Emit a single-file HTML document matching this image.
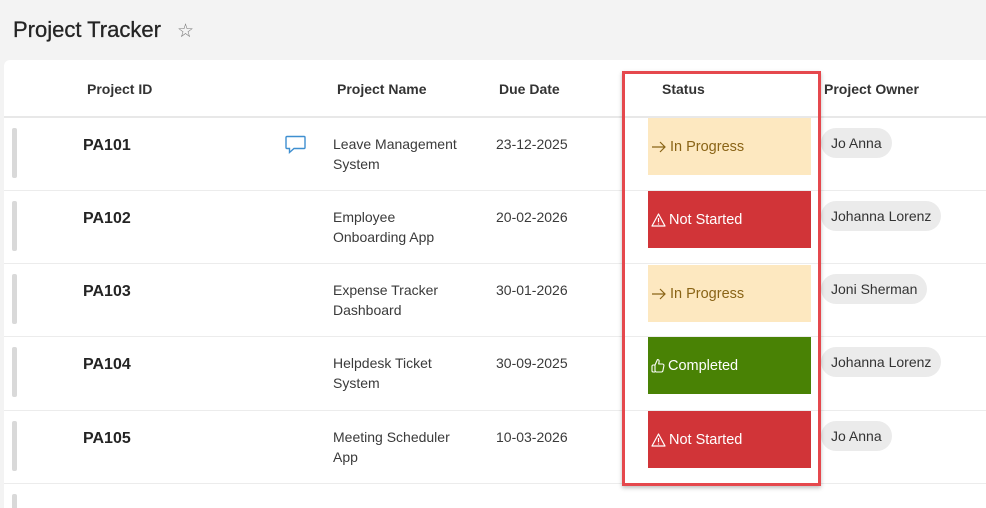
<!DOCTYPE html>
<html><head><meta charset="utf-8"><style>
*{margin:0;padding:0;box-sizing:border-box}
html,body{width:986px;height:508px;overflow:hidden}
body{background:#f3f3f3;font-family:"Liberation Sans",sans-serif;color:#242424;position:relative}
.abs{position:absolute}
.title{left:13px;top:17px;font-size:22px;color:#242424;-webkit-text-stroke:0.3px #242424}
.star{left:177px;top:20px;font-size:19px;color:#777}
.card{left:4px;top:60px;width:982px;height:448px;background:#fff;border-radius:6px 0 0 0}
.hdr{font-size:14px;font-weight:bold;color:#333;top:81px}
.line{left:4px;width:982px;height:1px;background:#ececec}
.bar{left:12px;width:5px;height:50px;background:#d9d9d9;border-radius:2px}
.pid{left:83px;font-size:16px;font-weight:bold;color:#242424}
.txt{font-size:14px;color:#3a3a3a;line-height:20px}
.st{left:648px;width:163px;height:57px;font-size:14.5px;display:flex;align-items:center;padding-left:3px}
.st svg{margin-right:3px}
.ip{background:#fde8c0;color:#8a6416}
.ns{background:#d13438;color:#fff}
.cp{background:#498205;color:#fff}
.chip{left:821px;height:30px;border-radius:15px;background:#ebebeb;font-size:14px;color:#333;padding:0 10px;line-height:30px}
.red{left:622px;top:71px;width:199px;height:415px;border:3px solid #e5484d;box-shadow:0 2px 4px rgba(0,0,0,.25)}
</style></head><body>
<div class="abs title">Project Tracker</div>
<div class="abs star">☆</div>
<div class="abs card"></div>
<div class="abs hdr" style="left:87px">Project ID</div>
<div class="abs hdr" style="left:337px">Project Name</div>
<div class="abs hdr" style="left:499px">Due Date</div>
<div class="abs hdr" style="left:662px">Status</div>
<div class="abs hdr" style="left:824px">Project Owner</div>
<div class="abs line" style="top:116px;height:2px;background:#e8e8e8"></div>
<div class="abs line" style="top:190px"></div>
<div class="abs line" style="top:263px"></div>
<div class="abs line" style="top:336px"></div>
<div class="abs line" style="top:410px"></div>
<div class="abs line" style="top:483px"></div>

<div class="abs bar" style="top:128px"></div>
<div class="abs bar" style="top:201px"></div>
<div class="abs bar" style="top:274px"></div>
<div class="abs bar" style="top:347px"></div>
<div class="abs bar" style="top:421px"></div>
<div class="abs bar" style="top:494px;height:14px;border-radius:2px 2px 0 0"></div>

<div class="abs pid" style="top:137px">PA101</div>
<div class="abs pid" style="top:210px">PA102</div>
<div class="abs pid" style="top:283px">PA103</div>
<div class="abs pid" style="top:356px">PA104</div>
<div class="abs pid" style="top:430px">PA105</div>

<svg class="abs" style="left:285px;top:135px" width="22" height="20" viewBox="0 0 22 20"><path d="M2 1.5h17a1 1 0 0 1 1 1v10a1 1 0 0 1-1 1H9l-4.5 4v-4H2a1 1 0 0 1-1-1v-10a1 1 0 0 1 1-1z" fill="none" stroke="#3f8fd0" stroke-width="1.4"/></svg>

<div class="abs txt" style="left:333px;top:134px">Leave Management<br>System</div>
<div class="abs txt" style="left:333px;top:207px">Employee<br>Onboarding App</div>
<div class="abs txt" style="left:333px;top:280px">Expense Tracker<br>Dashboard</div>
<div class="abs txt" style="left:333px;top:353px">Helpdesk Ticket<br>System</div>
<div class="abs txt" style="left:333px;top:427px">Meeting Scheduler<br>App</div>

<div class="abs txt" style="left:496px;top:134px">23-12-2025</div>
<div class="abs txt" style="left:496px;top:207px">20-02-2026</div>
<div class="abs txt" style="left:496px;top:280px">30-01-2026</div>
<div class="abs txt" style="left:496px;top:353px">30-09-2025</div>
<div class="abs txt" style="left:496px;top:427px">10-03-2026</div>

<div class="abs st ip" style="top:118px"><svg width="16" height="14" viewBox="0 0 16 14"><path d="M1 7h13M9 2l5 5-5 5" fill="none" stroke="#8a6416" stroke-width="1.2"/></svg>In Progress</div>
<div class="abs st ns" style="top:191px"><svg width="15" height="14" viewBox="0 0 15 14"><path d="M7.5 1L14 13H1z" fill="none" stroke="#fff" stroke-width="1.2" stroke-linejoin="round"/><path d="M7.5 5v4.2M7.5 10.5v1" stroke="#fff" stroke-width="1.2"/></svg>Not Started</div>
<div class="abs st ip" style="top:265px"><svg width="16" height="14" viewBox="0 0 16 14"><path d="M1 7h13M9 2l5 5-5 5" fill="none" stroke="#8a6416" stroke-width="1.2"/></svg>In Progress</div>
<div class="abs st cp" style="top:337px"><svg width="14" height="15" viewBox="0 0 14 15"><path d="M4 7l2.5-5.5c1.2 0 1.8.8 1.6 2L7.7 6H11.5c1 0 1.6.9 1.4 1.8l-1 5c-.2.8-.8 1.2-1.6 1.2H5.5C4.7 14 4 13.3 4 12.5V7zM4 7H2.2C1.5 7 1 7.5 1 8.2v4.6c0 .7.5 1.2 1.2 1.2H4" fill="none" stroke="#fff" stroke-width="1.1" stroke-linejoin="round"/></svg>Completed</div>
<div class="abs st ns" style="top:411px"><svg width="15" height="14" viewBox="0 0 15 14"><path d="M7.5 1L14 13H1z" fill="none" stroke="#fff" stroke-width="1.2" stroke-linejoin="round"/><path d="M7.5 5v4.2M7.5 10.5v1" stroke="#fff" stroke-width="1.2"/></svg>Not Started</div>

<div class="abs chip" style="top:128px">Jo Anna</div>
<div class="abs chip" style="top:201px">Johanna Lorenz</div>
<div class="abs chip" style="top:274px">Joni Sherman</div>
<div class="abs chip" style="top:347px">Johanna Lorenz</div>
<div class="abs chip" style="top:421px">Jo Anna</div>

<div class="abs red"></div>
</body></html>
